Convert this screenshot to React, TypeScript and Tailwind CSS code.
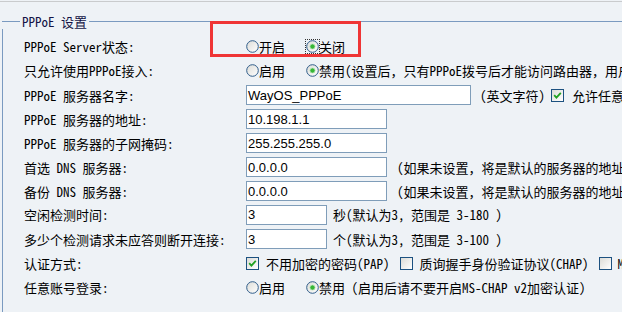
import React from "react";

const cjk = "font-['Noto_Sans_Mono_CJK_SC','Noto_Sans_CJK_SC','Liberation_Mono',monospace]";

// classic xp-ish radio
function Radio({ checked = false, focus = false }: { checked?: boolean; focus?: boolean }) {
  return (
    <span
      className={
        "inline-flex h-[13px] w-[13px] shrink-0 items-center justify-center " +
        (focus ? "outline-1 outline-dotted outline-[#333] outline-offset-0" : "")
      }
    >
      <svg width="13" height="13" viewBox="0 0 13 13">
        <defs>
          <linearGradient id="rg" x1="0" y1="0" x2="1" y2="1">
            <stop offset="0" stopColor="#dcdcd7" />
            <stop offset="1" stopColor="#ffffff" />
          </linearGradient>
        </defs>
        <circle cx="6.5" cy="6.5" r="5.8" fill="url(#rg)" stroke="#2f5d8a" strokeWidth="1" />
        {checked && <circle cx="6.5" cy="6.5" r="2.6" fill="#37b637" stroke="#bfe8bf" strokeWidth="0.8" />}
      </svg>
    </span>
  );
}

function Checkbox({ checked = false }: { checked?: boolean }) {
  return (
    <span className="inline-flex h-[13px] w-[13px] shrink-0 items-center justify-center border border-[#1c5180] bg-gradient-to-br from-[#dcdcd7] to-white">
      {checked && (
        <svg width="9" height="9" viewBox="0 0 9 9">
          <path d="M1.2 4.2 L3.4 6.6 L7.8 1.8" fill="none" stroke="#21a121" strokeWidth="1.8" />
        </svg>
      )}
    </span>
  );
}

function TextInput({ value, className }: { value: string; className: string }) {
  return (
    <span
      className={
        "flex h-[20px] shrink-0 items-center border border-[#7f9db9] bg-white pl-[1px] text-[13px] text-black font-['Liberation_Sans',Arial,sans-serif] " +
        className
      }
    >
      {value}
    </span>
  );
}

function Row({ label, h, children }: { label: string; h: string; children: React.ReactNode }) {
  return (
    <div className={"flex items-center whitespace-nowrap " + h}>
      <span className="w-[222px] shrink-0">{label}</span>
      <div className="flex items-center">{children}</div>
    </div>
  );
}

export default function App() {
  return (
    <div className={"relative h-[312px] w-[622px] overflow-hidden bg-[#eef2f6] text-[13px] leading-none text-black " + cjk}>
      <div className="mt-px h-px bg-[#c9cbcd]" />

      <div className="pl-[2px] pt-[11px]">
        {/* legend line */}
        <div className="flex h-[16px] items-center">
          <span className="h-px w-[18px] bg-[#7a9ac0]" />
          <span className="px-[2px] text-[#141446]">PPPoE 设置</span>
          <span className="h-px flex-1 bg-[#7a9ac0]" />
        </div>

        <div className="h-[300px] border-l border-[#7a9ac0] pl-[21px] pt-[5px]">
          <Row label="PPPoE Server状态:" h="h-[24px]">
            <span className="flex w-[60px] items-center">
              <Radio />
              <span>开启</span>
            </span>
            <Radio checked focus />
            <span>关闭</span>
          </Row>

          <Row label="只允许使用PPPoE接入:" h="h-[25px]">
            <span className="flex w-[60px] items-center">
              <Radio />
              <span>启用</span>
            </span>
            <Radio checked />
            <span>禁用(设置后，只有PPPoE拨号后才能访问路由器，用户名和密码</span>
          </Row>

          <Row label="PPPoE 服务器名字:" h="h-[24px]">
            <TextInput value="WayOS_PPPoE" className="w-[225px]" />
            <span className="ml-[9px]">(英文字符)</span>
            <span className="ml-[6px] flex">
              <Checkbox checked />
            </span>
            <span className="ml-[8px]">允许任意名字</span>
          </Row>

          <Row label="PPPoE 服务器的地址:" h="h-[24px]">
            <TextInput value="10.198.1.1" className="w-[141px]" />
          </Row>

          <Row label="PPPoE 服务器的子网掩码:" h="h-[24px]">
            <TextInput value="255.255.255.0" className="w-[141px]" />
          </Row>

          <Row label="首选 DNS 服务器:" h="h-[24px]">
            <TextInput value="0.0.0.0" className="w-[141px]" />
            <span className="ml-[10px]">(如果未设置，将是默认的服务器的地址)</span>
          </Row>

          <Row label="备份 DNS 服务器:" h="h-[24px]">
            <TextInput value="0.0.0.0" className="w-[141px]" />
            <span className="ml-[10px]">(如果未设置，将是默认的服务器的地址)</span>
          </Row>

          <Row label="空闲检测时间:" h="h-[23px]">
            <TextInput value="3" className="w-[81px]" />
            <span className="ml-[6px]">秒(默认为3, 范围是 3-180 )</span>
          </Row>

          <Row label="多少个检测请求未应答则断开连接:" h="h-[26px]">
            <TextInput value="3" className="w-[81px]" />
            <span className="ml-[6px]">个(默认为3, 范围是 3-100 )</span>
          </Row>

          <Row label="认证方式:" h="h-[23px]">
            <Checkbox checked />
            <span className="ml-[7px]">不用加密的密码(PAP)</span>
            <span className="ml-[10px] flex">
              <Checkbox />
            </span>
            <span className="ml-[7px]">质询握手身份验证协议(CHAP)</span>
            <span className="ml-[10px] flex">
              <Checkbox />
            </span>
            <span className="ml-[6px]">MS-CHAP</span>
          </Row>

          <Row label="任意账号登录:" h="h-[25px]">
            <span className="flex w-[60px] items-center">
              <Radio />
              <span>启用</span>
            </span>
            <Radio checked />
            <span>禁用 (启用后请不要开启MS-CHAP v2加密认证)</span>
          </Row>
        </div>
      </div>

      {/* red annotation box */}
      <div className="absolute left-[210px] top-[21px] h-[36px] w-[151px] border-[3px] border-[#ef3535]" />
    </div>
  );
}
